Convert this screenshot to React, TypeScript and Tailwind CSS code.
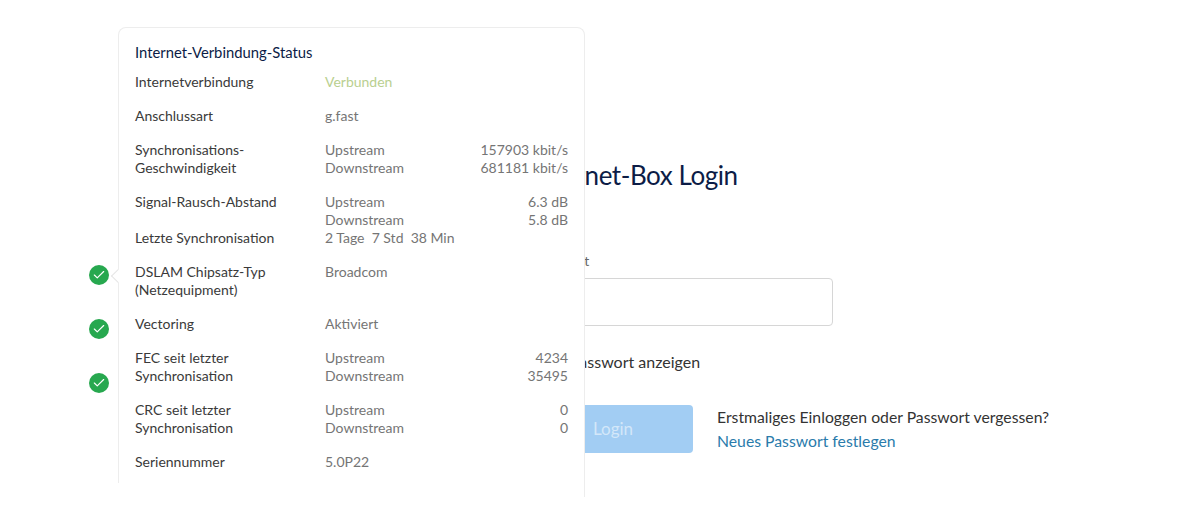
import { Check } from "lucide-react";

type Row = {
  label: string[];
  values: [string, string?][];
  tight?: boolean;
  valueClass?: string;
};

const rows: Row[] = [
  { label: ["Internetverbindung"], values: [["Verbunden"]], valueClass: "text-[#b9cf8f]" },
  { label: ["Anschlussart"], values: [["g.fast"]] },
  {
    label: ["Synchronisations-", "Geschwindigkeit"],
    values: [
      ["Upstream", "157903 kbit/s"],
      ["Downstream", "681181 kbit/s"],
    ],
  },
  {
    label: ["Signal-Rausch-Abstand"],
    values: [
      ["Upstream", "6.3 dB"],
      ["Downstream", "5.8 dB"],
    ],
    tight: true,
  },
  { label: ["Letzte Synchronisation"], values: [["2 Tage\u00a0\u00a07 Std\u00a0\u00a038 Min"]] },
  { label: ["DSLAM Chipsatz-Typ", "(Netzequipment)"], values: [["Broadcom"]] },
  { label: ["Vectoring"], values: [["Aktiviert"]] },
  {
    label: ["FEC seit letzter", "Synchronisation"],
    values: [
      ["Upstream", "4234"],
      ["Downstream", "35495"],
    ],
  },
  {
    label: ["CRC seit letzter", "Synchronisation"],
    values: [
      ["Upstream", "0"],
      ["Downstream", "0"],
    ],
  },
  { label: ["Seriennummer"], values: [["5.0P22"]] },
];

function StatusCheck() {
  return (
    <div className="flex h-5 w-5 items-center justify-center rounded-full bg-[#27a84f]">
      <Check className="h-3.5 w-3.5 text-white" strokeWidth={2} />
    </div>
  );
}

function StatusPopover() {
  return (
    <div className="absolute left-[118px] top-[27px] h-[470px] w-[467px] rounded-t-lg border-x border-t border-[#ededed] bg-white px-4 pt-[15px] text-[14px] leading-[18px]">
      <div className="absolute left-[-6px] top-[243px] h-[10px] w-[10px] rotate-45 border-b border-l border-[#e6e6e6] bg-white" />
      <div className="absolute bottom-0 left-[-1px] h-[14px] w-[3px] bg-white" />
      <h3 className="h-[20px] text-[14.8px] text-[#0c1c46]">Internet-Verbindung-Status</h3>
      <div className="mt-[10px]">
        {rows.map((row) => (
          <div key={row.label[0]} className={row.tight ? "flex" : "mb-4 flex"}>
            <div className="w-[190px] shrink-0 text-[#3a3a3a]">
              {row.label.map((line) => (
                <div key={line}>{line}</div>
              ))}
            </div>
            <div className={`flex-1 ${row.valueClass ?? "text-[#757575]"}`}>
              {row.values.map(([name, amount]) => (
                <div key={name} className="flex justify-between">
                  <span className="whitespace-nowrap">{name}</span>
                  {amount ? <span>{amount}</span> : null}
                </div>
              ))}
            </div>
          </div>
        ))}
      </div>
    </div>
  );
}

export default function App() {
  return (
    <div className="relative flex h-[518px] w-[1178px] overflow-hidden bg-white font-['Lato',sans-serif]">
      <div className="flex w-[533px] shrink-0 flex-col gap-[34px] pl-[89px] pt-[265px]">
        <StatusCheck />
        <div className="flex items-center">
          <StatusCheck />
          <span className="ml-[9px] h-px w-[2px] bg-[#555555]" />
        </div>
        <StatusCheck />
      </div>

      <div className="pt-[157px]">
        <h1 className="whitespace-nowrap text-[26px] leading-9 tracking-[-0.45px] text-[#0c1c46]">
          Internet-Box Login
        </h1>
        <div className="mt-[59px] text-[14px] leading-[18px] text-[#666666]">Passwort</div>
        <div className="mt-[8px] h-[48px] w-[300px] rounded border border-[#d6d6d6] bg-white" />
        <div className="mt-[26px] pl-[37px] text-[16px] leading-5 text-[#333333]">Passwort anzeigen</div>
        <div className="mt-[33px] flex items-center gap-6">
          <button
            type="button"
            className="h-[48px] w-[160px] rounded bg-[#a2cdf3] text-[17px] text-[#d3e7f9]"
          >
            Login
          </button>
          <div className="whitespace-nowrap text-[15.75px] leading-[24px] text-[#333333]">
            <div>Erstmaliges Einloggen oder Passwort vergessen?</div>
            <div className="text-[#2a7bab]">Neues Passwort festlegen</div>
          </div>
        </div>
      </div>

      <StatusPopover />
    </div>
  );
}
